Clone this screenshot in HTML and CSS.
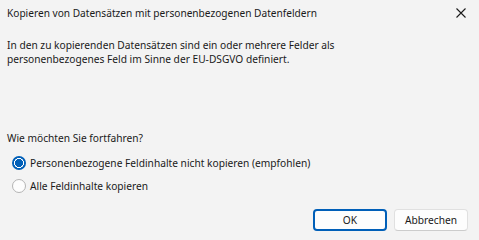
FILE: index.html
```html
<!DOCTYPE html>
<html lang="de">
<head>
<meta charset="utf-8">
<link rel="stylesheet" href="styles.css">
</head>
<body>
<div class="dialog">
  <div class="titlebar">
    <span class="title">Kopieren von Datensätzen mit personenbezogenen Datenfeldern</span>
    <span class="close">
      <svg width="10" height="10" viewBox="0 0 10 10"><path d="M0.5 0.5 L9.5 9.5 M9.5 0.5 L0.5 9.5" stroke="#1a1a1a" stroke-width="1.1" fill="none"/></svg>
    </span>
  </div>
  <p class="message">In den zu kopierenden Datensätzen sind ein oder mehrere Felder als<br>personenbezogenes Feld im Sinne der EU-DSGVO definiert.</p>
  <p class="question">Wie möchten Sie fortfahren?</p>
  <div class="options">
    <label class="option"><span class="radio checked"></span>Personenbezogene Feldinhalte nicht kopieren (empfohlen)</label>
    <label class="option"><span class="radio"></span>Alle Feldinhalte kopieren</label>
  </div>
  <div class="buttons">
    <button class="btn primary">OK</button>
    <button class="btn">Abbrechen</button>
  </div>
</div>
</body>
</html>
```
FILE: styles.css
```css
html, body {
  margin: 0;
  padding: 0;
  background: #f3f3f3;
}
body {
  font-family: "Noto Sans", "Open Sans", sans-serif;
  font-size: 10.2px;
  color: #1a1a1a;
  width: 479px;
  height: 240px;
  overflow: hidden;
}
.dialog {
  display: flex;
  flex-direction: column;
  height: 240px;
}
.titlebar {
  display: flex;
  align-items: center;
  justify-content: space-between;
  height: 26px;
  padding: 0 13px 0 7px;
}
.title {
  font-size: 10.15px;
}
.close {
  display: flex;
  width: 10px;
  height: 10px;
}
.message {
  margin: 12px 0 0 7px;
  line-height: 14px;
}
.question {
  margin: 65px 0 0 7px;
  line-height: 14px;
}
.options {
  display: flex;
  flex-direction: column;
  gap: 7px;
  margin: 10px 0 0 12px;
}
.option {
  display: flex;
  align-items: center;
  gap: 4px;
  height: 16px;
}
.radio {
  box-sizing: border-box;
  width: 14px;
  height: 14px;
  border-radius: 50%;
  background: #fdfdfd;
  border: 1px solid #b4b4b4;
  flex: none;
}
.radio.checked {
  border: none;
  background: radial-gradient(circle closest-side, #005fb8 0 3.8px, #ffffff 4.2px 4.8px, #005fb8 5.2px);
}
.buttons {
  margin-top: auto;
  display: flex;
  justify-content: flex-end;
  gap: 7px;
  padding: 0 11px 9px 0;
}
.btn {
  box-sizing: border-box;
  width: 74px;
  height: 22px;
  font-family: inherit;
  font-size: 10.2px;
  color: #1a1a1a;
  background: #fdfdfd;
  border: 1px solid #e0e0e0;
  border-bottom-color: #cccccc;
  border-radius: 4px;
  padding: 0;
}
.btn.primary {
  border: 2px solid #005fb8;
}
```
